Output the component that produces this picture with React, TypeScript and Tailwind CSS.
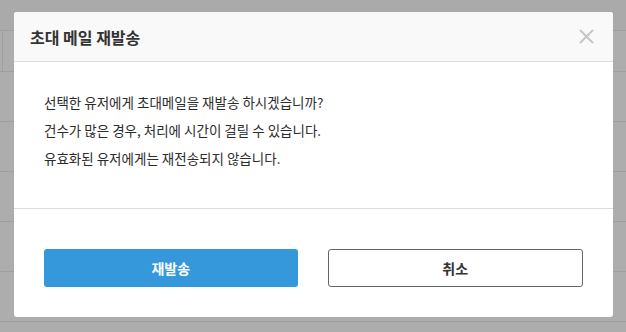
import React from 'react';

const rows = [0, 1, 2, 3, 4];

const App: React.FC = () => {
  return (
    <div
      className="relative w-[626px] h-[332px] overflow-hidden bg-[#adadad]"
      style={{ fontFamily: '"Noto Sans CJK KR", "Noto Sans", sans-serif' }}
    >
      {/* table behind the dimmed overlay */}
      <div className="h-[31px] bg-[#aaaaaa] border-b border-[#9f9f9f]" />
      <div className="h-[41px] border-b border-[#9f9f9f] flex">
        <div className="w-[3px] border-r border-[#9f9f9f]" />
      </div>
      {rows.map((r) => (
        <div key={r} className="h-[50px] border-b border-[#9f9f9f]" />
      ))}

      {/* modal */}
      <div className="absolute left-[14px] top-[12px] w-[599px] h-[305px] bg-white rounded-[3px] flex flex-col overflow-hidden">
        <div className="h-[50px] shrink-0 bg-[#f9f9f9] border-b border-[#dddddd] flex items-center justify-between pl-[16px] pr-[19px]">
          <h1 className="text-[16px] font-bold text-[#333333]">초대 메일 재발송</h1>
          <svg width="15" height="15" viewBox="0 0 15 15" className="text-[#c4c4c4]">
            <path d="M1 1L14 14M14 1L1 14" stroke="currentColor" strokeWidth="1.8" />
          </svg>
        </div>

        <div className="pl-[30px] pt-[26px] pb-[36px] border-b border-[#dddddd] text-[13.5px] leading-[28px] text-[#2b2b2b]">
          <p>선택한 유저에게 초대메일을 재발송 하시겠습니까?</p>
          <p>건수가 많은 경우, 처리에 시간이 걸릴 수 있습니다.</p>
          <p>유효화된 유저에게는 재전송되지 않습니다.</p>
        </div>

        <div className="flex gap-[30px] px-[30px] pt-[40px]">
          <button className="flex-1 h-[38px] rounded-[3px] bg-[#3498db] text-white text-[14px] font-bold">
            재발송
          </button>
          <button className="flex-1 h-[38px] rounded-[3px] border border-[#666666] bg-white text-[#333333] text-[14px] font-bold">
            취소
          </button>
        </div>
      </div>
    </div>
  );
};

export default App;
